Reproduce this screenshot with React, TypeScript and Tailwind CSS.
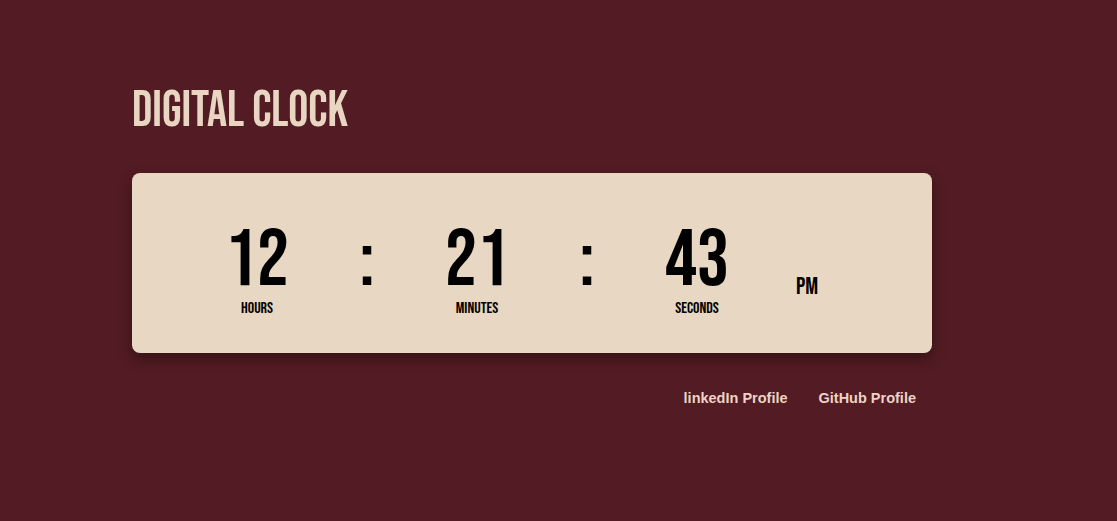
const display = "font-['Bebas_Neue','Liberation_Sans_Narrow','Liberation_Sans',sans-serif] font-normal";

function Unit({ value, label }: { value: string; label: string }) {
  return (
    <div className="w-[110px] flex flex-col items-center">
      <span className={`${display} text-[80px] leading-none`}>{value}</span>
      <span className={`${display} text-[16px] leading-none`}>{label}</span>
    </div>
  );
}

function Colon() {
  return (
    <div className="w-[110px] flex justify-center">
      <span className={`${display} text-[80px] leading-none`}>:</span>
    </div>
  );
}

export default function App() {
  return (
    <div className="min-h-[521px] bg-[#531b23] pt-[86px]">
      <div className="ml-[132px] w-[800px]">
        <h1 className={`${display} text-[50px] leading-none text-[#e8d6c3]`}>DIGITAL CLOCK</h1>

        <div className="mt-[37px] h-[180px] rounded-lg bg-[#e8d8c3] shadow-[0_6px_14px_rgba(0,0,0,0.35)] flex justify-center items-start pt-[48px] text-black">
          <Unit value="12" label="HOURS" />
          <Colon />
          <Unit value="21" label="MINUTES" />
          <Colon />
          <Unit value="43" label="SECONDS" />
          <div className="w-[110px] flex justify-center mt-[54px]">
            <span className={`${display} text-[24px] leading-none`}>PM</span>
          </div>
        </div>

        <div className="mt-[38px] pr-4 flex justify-end gap-[31px] font-['Liberation_Sans',Arial,sans-serif] font-bold text-[14.5px] leading-none text-[#ecd3c6]">
          <a href="#">linkedIn Profile</a>
          <a href="#">GitHub Profile</a>
        </div>
      </div>
    </div>
  );
}
